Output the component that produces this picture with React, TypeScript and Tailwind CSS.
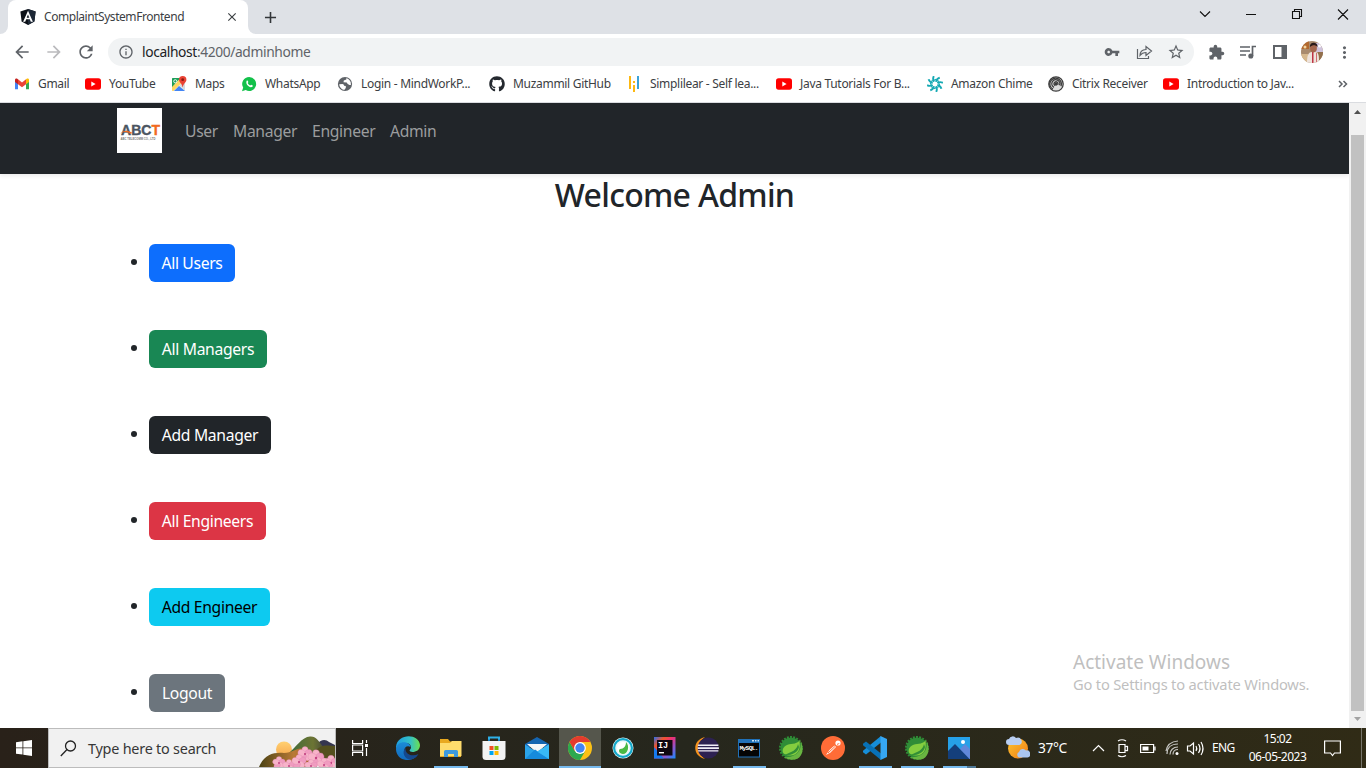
import React from "react";
import {
  MdArrowBack, MdArrowForward, MdRefresh, MdInfoOutline, MdVpnKey, MdStarBorder,
  MdExtension, MdMoreVert, MdClose, MdAdd,
} from "react-icons/md";
import { FaGithub } from "react-icons/fa";

type Kids = { children?: React.ReactNode };

function AngularIcon() {
  return (
    <svg width="16" height="16" viewBox="0 0 16 16">
      <path d="M8 0 15.6 2.6 14.4 12.6 8 16 1.6 12.6.4 2.6Z" fill="#0c1118" />
      <path d="M8 0 15.6 2.6 14.4 12.6 8 16Z" fill="#1d2836" />
      <path d="M8 1.800 3.100 12.800h2.100l1-2.500h3.600l1 2.500h2.100ZM8 5.400l1.300 3.300H6.700Z" fill="#fff" fillRule="evenodd" />
    </svg>
  );
}

function YouTube() {
  return (
    <svg width="16" height="16" viewBox="0 0 16 16" className="shrink-0">
      <rect x="0" y="2.3" width="16" height="11.4" rx="2.6" fill="#f00" />
      <path d="M6.3 5.6 10.6 8 6.3 10.4Z" fill="#fff" />
    </svg>
  );
}

function Gmail() {
  return (
    <svg width="16" height="16" viewBox="0 0 16 16">
      <path d="M1 4v9.2h3V6.6Z" fill="#4285f4" />
      <path d="M15 4v9.2h-3V6.6Z" fill="#34a853" />
      <path d="M1 4.1C1 2.6 2.7 2.3 3.5 2.9L4 3.3v4.9L1 5.9Z" fill="#c5221f" />
      <path d="m4 3.3 4 3.1 4-3.1v4.9l-4 3-4-3Z" fill="#ea4335" />
      <path d="M15 4.1c0-1.5-1.7-1.8-2.5-1.2l-.5.4v4.9l3-2.3Z" fill="#fbbc04" />
    </svg>
  );
}

function Maps() {
  return (
    <svg width="16" height="16" viewBox="0 0 16 16">
      <rect x="1" y="2" width="13" height="13" rx="1.2" fill="#e8eaed" />
      <path d="M1 3c0-.6.4-1 1-1h8L1 12Z" fill="#1e9e58" />
      <path d="m1 11 8.500-9H14v1.500L2.500 15H2c-.6 0-1-.4-1-1Z" fill="#fdd663" />
      <path d="m3 15 5-5 6 5Z" fill="#4285f4" />
      <path d="m8.500 9.500 5.500-5V14Z" fill="#d8dade" />
      <circle cx="4.300" cy="5.300" r="1.600" fill="none" stroke="#fff" strokeWidth=".9" />
      <path d="M11.700 0a3.700 3.700 0 0 1 3.700 3.700c0 2.600-3 3.500-3.500 7.300h-.4C11 7.200 8 6.300 8 3.700A3.700 3.700 0 0 1 11.700 0Z" fill="#ea4335" />
      <circle cx="11.700" cy="3.700" r="1.400" fill="#8c1a12" />
    </svg>
  );
}

function WhatsApp() {
  return (
    <svg width="16" height="16" viewBox="0 0 16 16">
      <path d="M8.200 1a7 7 0 1 1-3.500 13.100L1 15.200l1.200-3.600A7 7 0 0 1 8.200 1Z" fill="#12c14a" />
      <path d="M5.800 4.600c.3-.3.700-.3.900.1l.7 1.400-.7 1c.5 1.200 1.400 2 2.500 2.500l.9-.9 1.600.8c.3.200.2.800-.1 1.100-2.300 2.500-8-2.300-5.800-6Z" fill="#fff" />
    </svg>
  );
}

function Globe() {
  return (
    <svg width="16" height="16" viewBox="0 0 16 16">
      <circle cx="8" cy="8" r="7.100" fill="#5f6368" />
      <path d="M2.200 8.200 5.500 8q1.500.2 1.600 1.700l1.700.3v2l-1.600 2Q2.500 12.500 2.200 8.200ZM9.500 2.100l-.2 1.500-2.500 1-.3 1.700 3.200.2 1 1.600 1.800.8h1.400Q14.300 4 9.500 2.100Z" fill="#fff" />
    </svg>
  );
}

function Simplilearn() {
  return (
    <svg width="16" height="16" viewBox="0 0 16 16">
      <path d="M3 0h2v13H3ZM7 5h2v2H7ZM7 9h2v7H7Z" fill="#fcb813" />
      <path d="M11 0h2v13h-2Z" fill="#3ba2d8" />
    </svg>
  );
}

function Chime() {
  return (
    <svg width="16" height="16" viewBox="0 0 16 16" fill="none" stroke="#15a9b4" strokeWidth="1.900">
      {[0, 45, 90, 135, 180, 225, 270, 315].map((a) => (
        <path key={a} d="M7 5.700Q5.400 3 6.800.1" transform={`rotate(${a} 8 8)`} />
      ))}
      {[0, 45, 90, 135, 180, 225, 270, 315].map((a) => (
        <path key={a} d="M6.600 4.500 9 3.300" strokeWidth="1.100" transform={`rotate(${a} 8 8)`} />
      ))}
    </svg>
  );
}

function Citrix() {
  return (
    <svg width="16" height="16" viewBox="0 0 16 16" fill="none" stroke="#3c3c3c" strokeWidth="1.300">
      <circle cx="8" cy="8" r="7.200" fill="#ddd" />
      <path d="M5 13.200a5.800 5.800 0 1 1 8-3M6 11.300a4 4 0 1 1 5.500-2M7 9.500a2 2 0 1 1 2.700-.7" />
      <circle cx="8" cy="8" r="1" fill="#3c3c3c" />
    </svg>
  );
}

function Bookmark({ icon, label, className }: { icon: React.ReactNode; label: string; className: string }) {
  return (
    <a className={`flex h-full shrink-0 items-center gap-2 whitespace-nowrap text-[12px] tracking-[-0.3px] text-[#3c4043] ${className}`}>
      <span className="flex size-4 shrink-0 items-center justify-center">{icon}</span>
      <span>{label}</span>
    </a>
  );
}

function TabStrip() {
  return (
    <div className="flex h-[34px] bg-[#dee1e6]">
      <div className="flex w-2 shrink-0 bg-white"><div className="w-2 rounded-br-lg bg-[#dee1e6]" /></div>
      <div className="flex w-60 shrink-0 items-center rounded-t-lg bg-white pl-3 pr-[9px]">
        <AngularIcon />
        <span className="ml-2 grow text-[12px] tracking-[-0.45px] text-[#3c4043]">ComplaintSystemFrontend</span>
        <MdClose size={14} color="#3c4043" />
      </div>
      <div className="flex w-2 shrink-0 bg-white"><div className="w-2 rounded-bl-lg bg-[#dee1e6]" /></div>
      <div className="flex w-7 items-center justify-center"><MdAdd size={19} color="#333639" /></div>
      <svg width="176" height="34" viewBox="0 0 176 34" className="ml-auto" fill="none" stroke="#111" strokeWidth="1.100">
        <path d="m10 11.500 5 5 5-5M56 14.500h10M148 9.500l10 10m0-10-10 10" />
        <path d="M102.500 11.500h7v7h-7ZM104.500 11.500v-2h7v7h-2" />
      </svg>
    </div>
  );
}

function Toolbar() {
  return (
    <div className="flex h-9 items-center bg-white pl-[12px] text-[#5f6368]">
      <MdArrowBack size={20} color="#5f6368" />
      <MdArrowForward size={20} color="#bababd" className="ml-3" />
      <MdRefresh size={20} color="#5f6368" className="ml-3" />
      <div className="ml-3 flex h-7 w-[1086px] items-center rounded-full bg-[#f1f3f4] pl-2.5 pr-[9px]">
        <MdInfoOutline size={16} />
        <span className="ml-2 text-[13.800px] tracking-[-0.380px]"><span className="text-[#202124]">localhost</span>:4200/adminhome</span>
        <MdVpnKey size={16} className="ml-auto" />
        <svg width="17" height="16" viewBox="0 0 17 16" className="ml-4" fill="none" stroke="#5f6368" strokeWidth="1.200">
          <path d="M1.500 5v9.500h11V12M4 11.500C4 7.500 6.500 5.700 10 5.500V2.500L15.500 7 10 11.500V8.500C7.500 8.500 5.500 9.500 4 11.500Z" />
        </svg>
        <MdStarBorder size={18} className="ml-[14px]" />
      </div>
      <MdExtension size={17} className="ml-[14px]" />
      <svg width="18" height="16" viewBox="0 0 18 16" className="ml-[14px]" fill="none" stroke="#5f6368" strokeWidth="1.700">
        <path d="M1 3h10M1 7h10M1 11h6M13.500 12V2.500H17" /><circle cx="11.800" cy="12" r="1.700" fill="#5f6368" />
      </svg>
      <svg width="16" height="16" viewBox="0 0 16 16" className="ml-[15px]">
        <path d="M1 1h14v14H1ZM3 3v10h6.500V3Z" fill="#5f6368" fillRule="evenodd" />
      </svg>
      <svg width="22" height="22" viewBox="0 0 22 22" className="ml-[13px] overflow-hidden rounded-full">
        <rect width="22" height="22" fill="#a98b6e" />
        <path d="M0 0h8v8H0Z" fill="#b2692f" /><path d="M14 2h8v9h-8Z" fill="#cfc3dc" /><path d="M0 13h7v9H0Z" fill="#d7b98f" />
        <path d="M17 11h5v11h-5Z" fill="#92704c" />
        <path d="M6 22c0-7 1-11 5-11h3c4 0 4 4 4 11Z" fill="#eee3dc" />
        <path d="M11 11h1.500v11H11Z" fill="#be3545" /><path d="M15 12h1v10h-1Z" fill="#cf6d70" />
        <ellipse cx="12.500" cy="7" rx="3.400" ry="4.400" fill="#a5664d" /><path d="M9 6c-1-5 8-6 7.500 0-2-2.500-5-2.500-7.500 0Z" fill="#291a19" />
        <circle cx="4" cy="6" r="1.500" fill="#f3d6a0" /><circle cx="18.500" cy="5" r="1.500" fill="#fff" />
      </svg>
      <MdMoreVert size={19} className="ml-3" />
    </div>
  );
}

function Bookmarks() {
  return (
    <div className="box-content flex h-[28px] items-center border-b border-[#dadce0] bg-white pb-1 pl-[14px]">
      <Bookmark icon={<Gmail />} label="Gmail" className="w-[71px]" />
      <Bookmark icon={<YouTube />} label="YouTube" className="w-[86px]" />
      <Bookmark icon={<Maps />} label="Maps" className="w-[70px]" />
      <Bookmark icon={<WhatsApp />} label="WhatsApp" className="w-24" />
      <Bookmark icon={<Globe />} label="Login - MindWorkP..." className="w-[152px]" />
      <Bookmark icon={<FaGithub size={16} color="#24292f" />} label="Muzammil GitHub" className="w-[137px]" />
      <Bookmark icon={<Simplilearn />} label="Simplilear - Self lea..." className="w-[150px]" />
      <Bookmark icon={<YouTube />} label="Java Tutorials For B..." className="w-[151px]" />
      <Bookmark icon={<Chime />} label="Amazon Chime" className="w-[121px]" />
      <Bookmark icon={<Citrix />} label="Citrix Receiver" className="w-[115px]" />
      <Bookmark icon={<YouTube />} label="Introduction to Jav..." className="w-[175px]" />
      <svg width="10" height="8" viewBox="0 0 10 8" fill="none" stroke="#5f6368" strokeWidth="1.500"><path d="m1 1 3 3-3 3M5.500 1l3 3-3 3" /></svg>
    </div>
  );
}

function Brand() {
  return (
    <svg width="45" height="45" viewBox="0 0 45 45" className="bg-white font-['Liberation_Sans',sans-serif]">
      <text x="4" y="27.300" fontSize="15" fontWeight="700" textLength="39" lengthAdjust="spacingAndGlyphs" fill="#4b5561" stroke="#4b5561" strokeWidth=".4">
        ABC<tspan fill="#f26b21" stroke="#f26b21">T</tspan>
      </text>
      <path d="M3 25.500Q8 20.500 15 24.500L14 26Q9 22.500 3 25.500Z" fill="#f26b21" />
      <text x="3.500" y="31.600" fontSize="3" fontWeight="700" textLength="35" lengthAdjust="spacingAndGlyphs" fill="#777">ABC TELECOMM CO., LTD</text>
    </svg>
  );
}

const actions = [
  { label: "All Users", look: "w-[86px] bg-[#0d6efd] text-white" },
  { label: "All Managers", look: "w-[118px] bg-[#198754] text-white" },
  { label: "Add Manager", look: "w-[122px] bg-[#212529] text-white" },
  { label: "All Engineers", look: "w-[117px] bg-[#dc3545] text-white" },
  { label: "Add Engineer", look: "w-[121px] bg-[#0dcaf0] text-black" },
  { label: "Logout", look: "w-[76px] bg-[#6c757d] text-white" },
];

function AdminPage() {
  return (
    <div className="relative flex h-[625px] overflow-hidden bg-white">
      <main className="grow">
        <nav className="flex h-[71px] bg-[#212529] pt-[5px] pl-[117px] shadow-[0_2px_4px_rgba(0,0,0,0.08)]">
          <Brand />
          <div className="ml-[23px] flex h-[47px] items-center text-[15.700px] tracking-[-0.330px] text-[#9b9d9e]">
            <a className="w-12">User</a>
            <a className="w-[79px]">Manager</a>
            <a className="w-[78px]">Engineer</a>
            <a>Admin</a>
          </div>
        </nav>
        <h2 className="h-[70px] text-center text-[32px] leading-[41px] font-medium tracking-[-0.700px] text-[#212529]">Welcome Admin</h2>
        <ul className="flex flex-col gap-12 pl-[131px]">
          {actions.map((a) => (
            <li key={a.label} className="flex h-[38px] items-center gap-3">
              <span className="-mt-[2px] size-1.5 rounded-full bg-[#212529]" />
              <button className={`h-[38px] rounded-md pt-[2px] text-[15.700px] tracking-[-0.330px] whitespace-nowrap ${a.look}`}>{a.label}</button>
            </li>
          ))}
        </ul>
      </main>
      <div className="flex w-[17px] flex-col items-center justify-between bg-[#f1f1f1]">
        <svg width="17" height="17" viewBox="0 0 17 17"><path d="m5 11 3.500-4 3.500 4Z" fill="#505050" /></svg>
        <div className="mt-[15px] w-[13px] grow bg-[#c1c1c1]" />
        <svg width="17" height="17" viewBox="0 0 17 17"><path d="m5 6 3.500 4L12 6Z" fill="#a3a3a3" /></svg>
      </div>
      <div className="absolute top-[546px] left-[1073px] whitespace-nowrap text-[#bfbfbf]">
        <p className="text-[19px] leading-[26px]">Activate Windows</p>
        <p className="text-[14.700px] leading-[18px] tracking-[-0.200px]">Go to Settings to activate Windows.</p>
      </div>
    </div>
  );
}

function Edge() {
  return (
    <svg width="24" height="24" viewBox="0 0 24 24">
      <defs>
        <linearGradient id="eg" x1="0" x2="1"><stop stopColor="#1b9de2" /><stop offset=".6" stopColor="#35c1c5" /><stop offset="1" stopColor="#6be04e" /></linearGradient>
        <linearGradient id="eb" x1="0" x2="0" y1="0" y2="1"><stop stopColor="#1b8bd6" /><stop offset="1" stopColor="#1269bd" /></linearGradient>
      </defs>
      <path d="M0 11C1-3 23-3 24 9c0 5-4 7-7.500 7-2.500 0-4-1-2-3 1.500-3-1-6-4.500-6C5 7 1 10 0 13Z" fill="url(#eg)" />
      <path d="M0 13C1 4 14 5 14.500 11 11 8.500 7 12 8.500 16.500c1.500 4 6.500 6 12.500 3C14 28 0 24 0 13Z" fill="url(#eb)" />
      <path d="M9.500 12C5 16 9 24 15 23.500c3-.5 6-2.500 7.500-5.500C17 21 9 19 9.500 12Z" fill="#15488d" />
    </svg>
  );
}

function Explorer() {
  return (
    <svg width="24" height="24" viewBox="0 0 24 24">
      <path d="M1 3h8l2 2.500h11V21H1Z" fill="#e9a91f" /><path d="M1 7h10l2-2h9.500v15H1Z" fill="#ffdc6c" />
      <path d="M5 21v-5.500q0-1.500 1.500-1.500h11q1.500 0 1.500 1.500V21h-4v-3H9v3Z" fill="#3f9ade" />
    </svg>
  );
}

function Store() {
  return (
    <svg width="24" height="24" viewBox="0 0 24 24">
      <path d="M7 7V1.500h10V7" fill="none" stroke="#2fb1e7" strokeWidth="2" />
      <path d="M.5 5h23v15.500q0 3.500-3.500 3.500H4Q.5 24 .5 20.500Z" fill="#f3f3f3" />
      <path d="M7 5V3.500M17 5V3.500" stroke="#147dbf" strokeWidth="2" />
      <path d="M7.500 10H11.500v4h-4Z" fill="#f25022" /><path d="M12.500 10h4v4h-4Z" fill="#7fba00" /><path d="M7.500 15h4v4h-4Z" fill="#00a4ef" /><path d="M12.500 15h4v4h-4Z" fill="#ffb900" />
    </svg>
  );
}

function Mail() {
  return (
    <svg width="24" height="24" viewBox="0 0 24 24">
      <path d="M0 8 12 1l12 7v3H0Z" fill="#1565b0" /><path d="M2 8h20l-9 8h-2Z" fill="#f5f6f7" />
      <path d="M0 8.500 12 16l12-7.500V23H0Z" fill="#2ba3e9" /><path d="m0 23 10-9.500L24 23Z" fill="#168bdc" /><path d="M24 8.500V23L12 15.500Z" fill="#38b9f5" />
    </svg>
  );
}

function Chrome() {
  return (
    <svg width="24" height="24" viewBox="0 0 24 24">
      <circle cx="12" cy="12" r="12" fill="#fbc116" />
      <path d="M1.600 6 6.800 15 12 18l5.200-3L12 24A12 12 0 0 1 1.600 6Z" fill="#2da94f" />
      <path d="M1.600 6A12 12 0 0 1 22.400 6H12L6.800 15Z" fill="#e33b2e" />
      <circle cx="12" cy="12" r="5.900" fill="#fff" /><circle cx="12" cy="12" r="4.700" fill="#4285f4" />
    </svg>
  );
}

function Webex() {
  return (
    <svg width="24" height="24" viewBox="0 0 24 24">
      <circle cx="12" cy="12" r="10.500" fill="#e9f7f8" /><circle cx="12" cy="12" r="8.900" fill="none" stroke="#14a8ca" strokeWidth="2.200" />
      <circle cx="12" cy="12" r="6" fill="#fff" /><path d="M15 6c4 4 2 12-3 12-4 0-5-4-3-5 4 0 6-3 6-7Z" fill="#49b944" />
    </svg>
  );
}

function IntelliJ() {
  return (
    <svg width="24" height="24" viewBox="0 0 24 24">
      <defs><linearGradient id="ij" x1="0" x2="1" y1="0" y2="1"><stop stopColor="#286ef1" /><stop offset=".25" stopColor="#ed562c" /><stop offset=".45" stopColor="#ed2f75" /><stop offset=".7" stopColor="#9055ce" /><stop offset="1" stopColor="#118dff" /></linearGradient></defs>
      <path d="M1 1h21.500v21.500H1Z" fill="url(#ij)" /><path d="M1 11 11 22.500H1Z" fill="#167bee" />
      <path d="M4 4h15.500v15.500H4Z" fill="#100811" />
      <text x="5" y="11.500" fontSize="8.500" fontWeight="700" fontFamily="Liberation Mono, monospace" fill="#fff">IJ</text>
      <path d="M6 16h5v1.400H6Z" fill="#fff" />
    </svg>
  );
}

function Eclipse() {
  return (
    <svg width="24" height="24" viewBox="0 0 24 24">
      <path d="M10 1C-3 4-3 20 10 23 2 18 2 6 10 1Z" fill="#f7941e" />
      <circle cx="13.300" cy="12" r="10.600" fill="#2d2151" />
      <path d="M3 8.500h20.400v1.400H2.800ZM2.700 11.300h21.200v1.600H2.700ZM3 14.200h20.400v1.400H3.200Z" fill="#f1eef7" />
    </svg>
  );
}

function MySql() {
  return (
    <svg width="24" height="24" viewBox="0 0 24 24">
      <path d="M1 3h22v18.500H1Z" fill="#2071b8" /><path d="M2 7h20v13.500H2Z" fill="#050505" />
      <path d="M15 4h2v1.500h-2ZM18 4h1.500v1.500H18ZM20.500 4H22v1.500h-1.500Z" fill="#c7e2f5" />
      <text x="2.500" y="14" fontSize="6.200" fontWeight="700" textLength="19" fontFamily="Liberation Mono, monospace" fill="#fff">MySQL.</text>
    </svg>
  );
}

function Spring() {
  return (
    <svg width="24" height="24" viewBox="0 0 24 24">
      <circle cx="12" cy="12" r="10.800" fill="none" stroke="#2f8d37" strokeWidth="2.400" strokeDasharray="1.900 1.200" />
      <circle cx="12" cy="12" r="10.500" fill="#2f8d37" />
      <path d="M21 3c2 5 4 11 1 16-3 6-12 6-17 2 6 1 14-2 16-8 1-3 1-7 0-10Z" fill="#69b541" />
      <path d="M20.500 4.500c1 8-.5 15-9.500 15-9 0-9-7-4-10C11 7 17 9 20.500 4.500Z" fill="#84ce3f" />
      <path d="M19 8c-1 6-6 8-14 11 6 1 14-2 15-8Z" fill="#328f37" />
    </svg>
  );
}

function Postman() {
  return (
    <svg width="24" height="24" viewBox="0 0 24 24">
      <circle cx="12" cy="12" r="12" fill="#ff6c37" />
      <path d="m5 19 3.500-5 5-4.500 1.500 1.500-5.500 5.500Z" fill="#fff" /><circle cx="17" cy="7" r="2.600" fill="#fff" />
      <path d="m7 17 7-6.500M16 8.200q1.500.5 2-1" stroke="#ff6c37" fill="none" />
    </svg>
  );
}

function Code() {
  return (
    <svg width="24" height="24" viewBox="0 0 24 24">
      <path d="M18 0v6.500L3 18.500 0 16.200v-1.500Z" fill="#168ed8" />
      <path d="M18 24v-6.500L3 5.500 0 7.800v1.500Z" fill="#0871b6" />
      <path d="m17.500 0 6.500 3v18l-6.500 3Z" fill="#36a7f2" />
    </svg>
  );
}

function Photos() {
  return (
    <svg width="24" height="24" viewBox="0 0 24 24">
      <path d="M1 1h22v22H1Z" fill="#26a1e8" /><path d="m13 13 5-5 5 5v10H12Z" fill="#6188da" />
      <path d="M1 15 8 8l14.500 15H1Z" fill="#143f7b" /><circle cx="16" cy="6" r="2" fill="#fff" />
    </svg>
  );
}

function TaskButton({ children, className = "w-[42px]", bar = "" }: Kids & { className?: string; bar?: string }) {
  return (
    <div className={`flex h-10 shrink-0 flex-col items-center ${className}`}>
      <div className="flex h-[38px] items-center pt-[2px]">{children}</div>
      <div className={`h-[2px] ${bar}`} />
    </div>
  );
}

function Blossom({ x, y, s }: { x: number; y: number; s: number }) {
  return (
    <g transform={`translate(${x} ${y}) scale(${s})`}>
      {[0, 72, 144, 216, 288].map((a) => (
        <ellipse key={a} cy="-4" rx="3.600" ry="4.200" fill={a % 144 ? "#f09cc0" : "#f7b3c9"} stroke="#dd7dac" strokeWidth=".3" transform={`rotate(${a})`} />
      ))}
      <circle r="1.200" fill="#c24180" />
    </g>
  );
}

function SearchArt() {
  return (
    <svg width="76" height="38" viewBox="0 0 76 38">
      <defs>
        <linearGradient id="sun" x1="0" x2="0" y1="0" y2="1"><stop stopColor="#ffd071" /><stop offset="1" stopColor="#f6a64c" /></linearGradient>
        <linearGradient id="hill" x1="0" x2="1"><stop stopColor="#3e6b3a" /><stop offset=".6" stopColor="#6c7434" /><stop offset="1" stopColor="#3a3b3a" /></linearGradient>
        <linearGradient id="soil" x1="0" x2="1"><stop stopColor="#4a4214" /><stop offset=".6" stopColor="#b97a35" /><stop offset="1" stopColor="#a05d1c" /></linearGradient>
      </defs>
      <circle cx="25" cy="20.500" r="8" fill="url(#sun)" />
      <path d="M58 15c4-5 9-5 12-2l6 3v12H55Z" fill="#353650" />
      <path d="M30 24C37 18 43 8 51 7.500c7-.5 9 6 14 11l5 9H30Z" fill="url(#hill)" />
      <path d="M55 24c5-8 11-8 21-7v15H50Z" fill="#54501e" />
      <path d="M0 38c5-12 14-15 25-14 9 0 13-6 19-4l14 18Z" fill="url(#soil)" />
      <Blossom x={20} y={34} s={0.800} /><Blossom x={30} y={37} s={0.800} /><Blossom x={46} y={25} s={0.900} />
      <Blossom x={57} y={29} s={1} /><Blossom x={72} y={34} s={0.950} /><Blossom x={40} y={33} s={0.900} /><Blossom x={52} y={37} s={0.800} /><Blossom x={65} y={36} s={0.850} />
    </svg>
  );
}

function Taskbar() {
  return (
    <footer className="flex h-10 items-center bg-linear-to-r from-[#292119] via-[#26271d] to-[#302b16] text-white">
      <div className="flex w-12 shrink-0 justify-center">
        <svg width="16" height="16" viewBox="0 0 16 16" fill="#fff"><path d="m0 2.200 6.500-.9v6.200H0ZM7.300 1.200 16 0v7.500H7.300ZM0 8.300h6.500v6.300L0 13.700ZM7.300 8.300H16V16l-8.700-1.200Z" /></svg>
      </div>
      <div className="flex h-10 w-72 shrink-0 items-center border border-[#bcbcbc] bg-[#f1f1f1] pl-[11px]">
        <svg width="17" height="17" viewBox="0 0 17 17" fill="none" stroke="#222" strokeWidth="1.300"><circle cx="10.500" cy="6" r="5" /><path d="M7 9.500.8 16" /></svg>
        <span className="ml-[11px] grow pt-px text-[14.400px] tracking-[-0.220px] whitespace-nowrap text-[#373737]">Type here to search</span>
        <SearchArt />
      </div>
      <div className="flex w-[50px] shrink-0 justify-center pr-[2px]">
        <svg width="17" height="16" viewBox="0 0 17 16" fill="none" stroke="#fff" strokeWidth="1.200"><path d="M.6 0v3.500h10V0M.6 16v-3.500h10V16M.6 5h10v6H.6ZM14.500 0v3M14.500 8v8" /><path d="M13 4h3v3h-3Z" fill="#fff" stroke="none" /></svg>
      </div>
      <TaskButton className="w-[43px]"><Edge /></TaskButton>
      <TaskButton className="w-[43px]" bar="w-[34px] bg-[#76b9ed]"><Explorer /></TaskButton>
      <TaskButton className="w-[43px]"><Store /></TaskButton>
      <TaskButton className="mr-px w-[43px]"><Mail /></TaskButton>
      <TaskButton className="w-[42px] bg-[#55564c]" bar="w-[42px] bg-[#76b9ed]"><Chrome /></TaskButton>
      <TaskButton className="ml-px w-[42px]"><Webex /></TaskButton>
      <TaskButton><IntelliJ /></TaskButton>
      <TaskButton><Eclipse /></TaskButton>
      <TaskButton bar="w-[33px] bg-[#76b9ed]"><MySql /></TaskButton>
      <TaskButton><Spring /></TaskButton>
      <TaskButton><Postman /></TaskButton>
      <TaskButton bar="w-[33px] bg-[#76b9ed]"><Code /></TaskButton>
      <TaskButton bar="w-[33px] bg-[#76b9ed]"><Spring /></TaskButton>
      <TaskButton bar="w-[33px] border-r-[9px] border-[#4f7896] bg-[#76b9ed]"><Photos /></TaskButton>
      <div className="ml-[26px] flex items-center">
        <svg width="24" height="24" viewBox="0 0 24 24">
          <defs><linearGradient id="wx" x1="0" x2="1" y1="0" y2="1"><stop stopColor="#ffc52d" /><stop offset="1" stopColor="#ed7b19" /></linearGradient></defs>
          <circle cx="12" cy="12.500" r="10" fill="url(#wx)" />
          <path d="M3 9a3 3 0 0 1 0-6 4 4 0 0 1 7-1 3.500 3.500 0 0 1 3.500 7Z" fill="#b8cef2" />
          <path d="M13 21.500a3 3 0 0 1 0-5.500 4 4 0 0 1 7-1.500 3.500 3.500 0 0 1 1.500 7Z" fill="#a9c5ef" />
        </svg>
        <span className="ml-2 w-[54px] text-[13.800px] tracking-[-0.4px]">37°C</span>
      </div>
      <svg width="116" height="24" viewBox="0 0 116 24" className="shrink-0" fill="none" stroke="#fff" strokeWidth="1.200">
        <path d="m1 15 5.500-5.500L12 15" />
        <path d="M27 8.500h6v8h-6ZM35.500 10v5M33 11l2.500-1M33 14l2.500 1M26 5q4-2.500 8 0M26 19.500q4 2.500 8 0" />
        <path d="M48.600 8.500h13v8h-13ZM63 10.500v4" /><path d="M50.500 10.500h6v4h-6Z" fill="#fff" stroke="none" />
        <path d="M75 18c0-6 4-10 11-10M78 18.500c0-4 3-7.500 8-7.500M81 18.500c0-3 2-5 5-5M74 15c1-6 5-9.500 12-10" stroke="#c4c4c0" /><circle cx="85" cy="17.500" r="1.500" fill="#fff" stroke="none" />
        <path d="M95.500 10h2.500l3.500-3v11l-3.500-3h-2.500ZM104 10q1.500 2.500 0 5M106.500 8q3 4.500 0 9M109 6q4 6.500 0 13" />
      </svg>
      <span className="ml-1 w-[33px] text-[12px] tracking-[-0.600px]">ENG</span>
      <div className="w-[65px] text-center text-[12px] leading-[18px] tracking-[-0.500px] whitespace-nowrap"><div>15:02</div><div>06-05-2023</div></div>
      <svg width="17" height="17" viewBox="0 0 17 17" className="ml-auto mr-5 shrink-0" fill="none" stroke="#fff" strokeWidth="1.200"><path d="M.6 1h15.800v12H10.500L8.500 15.500 6.500 13H.6Z" /></svg>
      <div className="mr-[4px] h-10 w-px shrink-0 bg-[#76746a]" />
    </footer>
  );
}

export default function App() {
  return (
    <div className="flex h-[768px] w-[1366px] flex-col overflow-hidden bg-white font-['Noto_Sans',sans-serif]">
      <TabStrip />
      <Toolbar />
      <Bookmarks />
      <AdminPage />
      <Taskbar />
    </div>
  );
}
